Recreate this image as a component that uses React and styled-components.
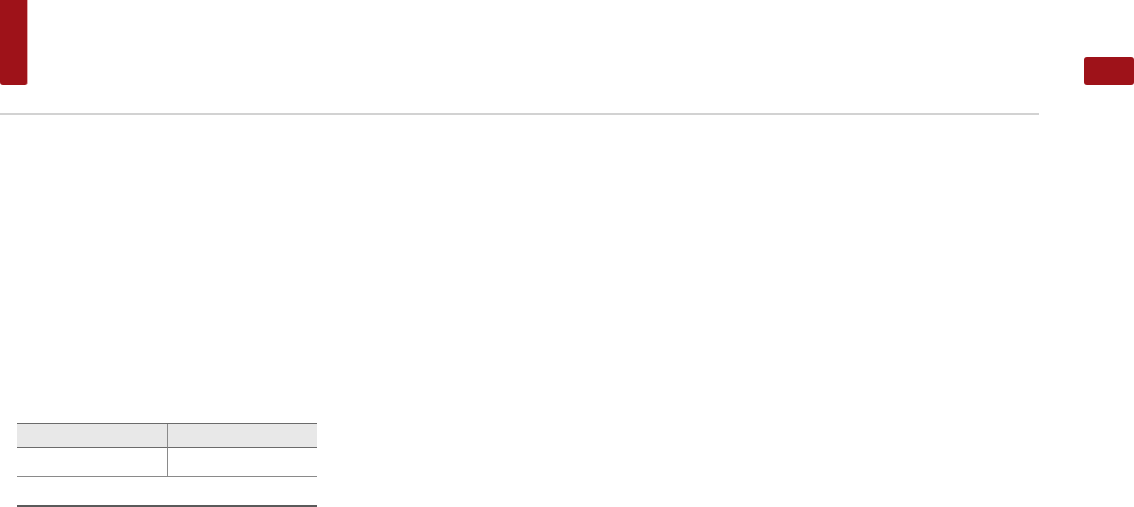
import styled, { createGlobalStyle } from 'styled-components';

const Global = createGlobalStyle`
  html, body {
    margin: 0;
    padding: 0;
    background: #fff;
    font-family: "Liberation Sans", Arial, sans-serif;
  }
`

const Page = styled.div`
  display: flex;
  width: 1134px;
  height: 507px;
  overflow: hidden;
`

const Main = styled.div`
  width: 1043px;
  display: flex;
  flex-direction: column;
`

const Header = styled.div`
  height: 113px;
  display: flex;
  align-items: flex-start;
`

const ChapterTab = styled.div`
  width: 27px;
  height: 85px;
  background: #9e1219;
  border-right: 1px solid #e4a9ac;
  border-radius: 0 0 3px 3px;
`

const Rule = styled.div`
  height: 2px;
  background: #d2d2d2;
`

const Body = styled.div`
  padding: 308px 0 0 17px;
`

const Table = styled.div`
  width: 300px;
  display: grid;
  grid-template-columns: 151px 149px;
  border-top: 1px solid #6b6b6b;
`

const Cell = styled.div`
  box-sizing: border-box;
  height: ${p => (p.$head ? '24px' : '29px')};
  background: ${p => (p.$head ? '#e8e8e8' : '#fff')};
  border-bottom: ${p => (p.$head ? '1px solid #6b6b6b' : '1px solid #8a8a8a')};
  border-right: ${p => (p.$last ? 'none' : '1.5px solid #8a8a8a')};
`

const Closing = styled.div`
  width: 300px;
  height: 2px;
  margin-top: 28px;
  background: #5a5a5a;
`

const Side = styled.div`
  flex: 1;
  padding: 57px 0 0 45px;
`

const SideTab = styled.div`
  width: 50px;
  height: 28px;
  background: #9e1219;
  border-radius: 3px;
`

const App = () => {
  return (
    <Page>
      <Global />
      <Main>
        <Header>
          <ChapterTab />
        </Header>
        <Rule />
        <Body>
          <Table>
            <Cell $head />
            <Cell $head $last />
            <Cell />
            <Cell $last />
          </Table>
          <Closing />
        </Body>
      </Main>
      <Side>
        <SideTab />
      </Side>
    </Page>
  )
}

export default App
